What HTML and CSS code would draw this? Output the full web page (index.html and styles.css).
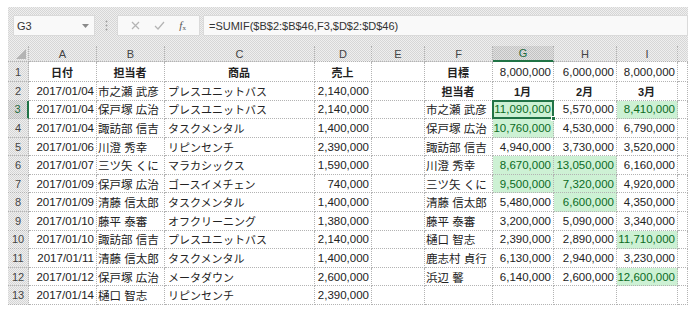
FILE: index.html
```html
<!DOCTYPE html>
<html lang="ja">
<head>
<meta charset="utf-8">
<title>SUMIF</title>
<link rel="stylesheet" href="styles.css">
</head>
<body>
<div class="app">
  <div class="fbar">
    <div class="namebox"><span>G3</span><svg class="dd" width="7" height="4" viewBox="0 0 7 4"><path d="M0 0h7L3.5 4z" fill="#8a8a8a"/></svg></div>
    <div class="vdots"><svg width="3" height="11" viewBox="0 0 3 11"><circle cx="1.5" cy="1.5" r="1" fill="#a0a0a0"/><circle cx="1.5" cy="5.5" r="1" fill="#a0a0a0"/><circle cx="1.5" cy="9.5" r="1" fill="#a0a0a0"/></svg></div>
    <div class="btns">
      <svg width="9" height="9" viewBox="0 0 9 9"><path d="M1 1l7 7M8 1l-7 7" stroke="#b4b4b4" stroke-width="1.2" fill="none"/></svg>
      <svg width="11" height="9" viewBox="0 0 11 9"><path d="M1 5l3 3 6-7" stroke="#b4b4b4" stroke-width="1.2" fill="none"/></svg>
      <span class="fx"><i>f</i><sub>x</sub></span>
    </div>
    <div class="formula">=SUMIF($B$2:$B$46,F3,$D$2:$D$46)</div>
  </div>
  <div class="sheet">
    <div class="corner"><svg width="10" height="10" viewBox="0 0 10 10"><path d="M10 0V10H0z" fill="#b4b4b4"/></svg></div>
    <div class="hd">A</div><div class="hd">B</div><div class="hd">C</div><div class="hd">D</div><div class="hd">E</div><div class="hd">F</div><div class="hd sel">G</div><div class="hd">H</div><div class="hd">I</div><div class="hd end"></div>

    <div class="rh">1</div>
    <div class="c ctr b">日付</div><div class="c ctr b">担当者</div><div class="c ctr b">商品</div><div class="c ctr b">売上</div><div class="c"></div>
    <div class="c ctr b">目標</div><div class="c r n">8,000,000</div><div class="c r n">6,000,000</div><div class="c r n">8,000,000</div><div class="c"></div>

    <div class="rh">2</div>
    <div class="c r n">2017/01/04</div><div class="c">市之瀬 武彦</div><div class="c k">プレスユニットバス</div><div class="c r n">2,140,000</div><div class="c"></div>
    <div class="c ctr b">担当者</div><div class="c ctr b">1月</div><div class="c ctr b">2月</div><div class="c ctr b">3月</div><div class="c"></div>

    <div class="rh sel">3</div>
    <div class="c r n">2017/01/04</div><div class="c">保戸塚 広治</div><div class="c k">プレスユニットバス</div><div class="c r n">2,140,000</div><div class="c"></div>
    <div class="c">市之瀬 武彦</div><div class="c r n hl active">11,090,000</div><div class="c r n">5,570,000</div><div class="c r n hl">8,410,000</div><div class="c"></div>

    <div class="rh">4</div>
    <div class="c r n">2017/01/04</div><div class="c">諏訪部 信吉</div><div class="c k">タスクメンタル</div><div class="c r n">1,400,000</div><div class="c"></div>
    <div class="c">保戸塚 広治</div><div class="c r n hl">10,760,000</div><div class="c r n">4,530,000</div><div class="c r n">6,790,000</div><div class="c"></div>

    <div class="rh">5</div>
    <div class="c r n">2017/01/06</div><div class="c">川澄 秀幸</div><div class="c k">リピンセンチ</div><div class="c r n">2,390,000</div><div class="c"></div>
    <div class="c">諏訪部 信吉</div><div class="c r n">4,940,000</div><div class="c r n">3,730,000</div><div class="c r n">3,520,000</div><div class="c"></div>

    <div class="rh">6</div>
    <div class="c r n">2017/01/07</div><div class="c">三ツ矢 くに</div><div class="c k">マラカシックス</div><div class="c r n">1,590,000</div><div class="c"></div>
    <div class="c">川澄 秀幸</div><div class="c r n hl">8,670,000</div><div class="c r n hl">13,050,000</div><div class="c r n">6,160,000</div><div class="c"></div>

    <div class="rh">7</div>
    <div class="c r n">2017/01/09</div><div class="c">保戸塚 広治</div><div class="c k">ゴースイメチェン</div><div class="c r n">740,000</div><div class="c"></div>
    <div class="c">三ツ矢 くに</div><div class="c r n hl">9,500,000</div><div class="c r n hl">7,320,000</div><div class="c r n">4,920,000</div><div class="c"></div>

    <div class="rh">8</div>
    <div class="c r n">2017/01/09</div><div class="c">清藤 信太郎</div><div class="c k">タスクメンタル</div><div class="c r n">1,400,000</div><div class="c"></div>
    <div class="c">清藤 信太郎</div><div class="c r n">5,480,000</div><div class="c r n hl">6,600,000</div><div class="c r n">4,350,000</div><div class="c"></div>

    <div class="rh">9</div>
    <div class="c r n">2017/01/10</div><div class="c">藤平 泰審</div><div class="c k">オフクリーニング</div><div class="c r n">1,380,000</div><div class="c"></div>
    <div class="c">藤平 泰審</div><div class="c r n">3,200,000</div><div class="c r n">5,090,000</div><div class="c r n">3,340,000</div><div class="c"></div>

    <div class="rh">10</div>
    <div class="c r n">2017/01/10</div><div class="c">諏訪部 信吉</div><div class="c k">プレスユニットバス</div><div class="c r n">2,140,000</div><div class="c"></div>
    <div class="c">樋口 智志</div><div class="c r n">2,390,000</div><div class="c r n">2,890,000</div><div class="c r n hl">11,710,000</div><div class="c"></div>

    <div class="rh">11</div>
    <div class="c r n">2017/01/11</div><div class="c">清藤 信太郎</div><div class="c k">タスクメンタル</div><div class="c r n">1,400,000</div><div class="c"></div>
    <div class="c">鹿志村 貞行</div><div class="c r n">6,130,000</div><div class="c r n">2,940,000</div><div class="c r n">3,230,000</div><div class="c"></div>

    <div class="rh">12</div>
    <div class="c r n">2017/01/12</div><div class="c">保戸塚 広治</div><div class="c k">メータダウン</div><div class="c r n">2,600,000</div><div class="c"></div>
    <div class="c">浜辺 馨</div><div class="c r n">6,140,000</div><div class="c r n">2,600,000</div><div class="c r n hl">12,600,000</div><div class="c"></div>

    <div class="rh">13</div>
    <div class="c r n">2017/01/14</div><div class="c">樋口 智志</div><div class="c k">リピンセンチ</div><div class="c r n">2,390,000</div><div class="c"></div>
    <div class="c"></div><div class="c"></div><div class="c"></div><div class="c"></div><div class="c"></div>
  </div>
</div>
</body>
</html>
```

FILE: styles.css
```css
html, body {
  margin: 0;
  background: #ffffff;
}
body {
  padding: 7px 10px 0 8px;
  font-family: "Liberation Sans", "Noto Sans CJK JP", sans-serif;
  color: #222;
}
.app {
  width: 680px;
  background: repeating-conic-gradient(#d6d6d6 0% 25%, #efefef 0% 50%) 0 0 / 2px 2px;
}
.fbar {
  display: flex;
  align-items: stretch;
  height: 21px;
  padding-top: 8px;
  padding-bottom: 10px;
}
.namebox {
  margin-left: 5px;
  width: 82px;
  box-sizing: border-box;
  background: #f9f9f9;
  border: 1px solid #dadada;
  display: flex;
  align-items: center;
  justify-content: space-between;
  padding: 0 5px 0 3px;
  font-size: 11px;
  color: #333;
}
.vdots {
  width: 22px;
  display: flex;
  align-items: center;
  justify-content: center;
}
.btns {
  width: 83px;
  box-sizing: border-box;
  background: #f9f9f9;
  border: 1px solid #dadada;
  display: flex;
  align-items: center;
  justify-content: space-around;
  padding: 0 6px;
}
.fx {
  font-family: "Liberation Serif", serif;
  font-size: 11px;
  color: #555;
  line-height: 1;
}
.fx sub {
  font-size: 7px;
  vertical-align: -1px;
}
.formula {
  margin-left: 3px;
  flex: 1;
  box-sizing: border-box;
  background: #f9f9f9;
  border: 1px solid #dadada;
  display: flex;
  align-items: center;
  padding-left: 5px;
  font-size: 11px;
  color: #333;
}
.sheet {
  display: grid;
  grid-template-columns: 21px 68px 68px 150px 57px 53px 68px 61px 63px 61px 10px;
  grid-template-rows: 16px 20px repeat(12, 18.58px);
  font-size: 11px;
}
.sheet > div {
  box-sizing: border-box;
  border-right: 1px dotted #b3b3b3;
  border-bottom: 1px dotted #b3b3b3;
  display: flex;
  align-items: center;
  white-space: nowrap;
  overflow: hidden;
}
.corner {
  justify-content: flex-end;
  align-items: flex-end !important;
  padding: 0 2px 2px 0;
}
.hd {
  justify-content: center;
  color: #444;
  font-size: 11px;
}
.hd.end {
  border-right: none !important;
}
.hd.sel {
  background: repeating-conic-gradient(#c2c2c2 0% 25%, #e0e0e0 0% 50%) 0 0 / 2px 2px;
  border-bottom: 2px solid #217346 !important;
  color: #1f6b3f;
}
.rh {
  justify-content: center;
  color: #444;
}
.rh.sel {
  background: repeating-conic-gradient(#c2c2c2 0% 25%, #e0e0e0 0% 50%) 0 0 / 2px 2px;
  border-right: 2px solid #217346 !important;
  color: #1f6b3f;
}
.c {
  background: #fff;
  padding: 0 2px 0 1px;
  font-size: 11.5px;
}
.c.k { font-size: 11px; padding-left: 3px; }
.c.r { justify-content: flex-end; }
.c.ctr { justify-content: center; }
.c.b { font-weight: bold; font-size: 11px; }
.c.n { font-size: 11.5px; }
.c.hl {
  background: #cdf1d4;
  color: #0b6b1f;
}
.c.active {
  position: relative;
  overflow: visible;
}
.c.active::after {
  content: "";
  position: absolute;
  left: -1px;
  top: -1px;
  right: -1px;
  bottom: -1px;
  border: 2px solid #217346;
}
.c.active::before {
  content: "";
  position: absolute;
  right: -3px;
  bottom: -3px;
  width: 5px;
  height: 5px;
  background: #217346;
  border: 1px solid #fff;
  box-sizing: border-box;
  z-index: 2;
}
```
